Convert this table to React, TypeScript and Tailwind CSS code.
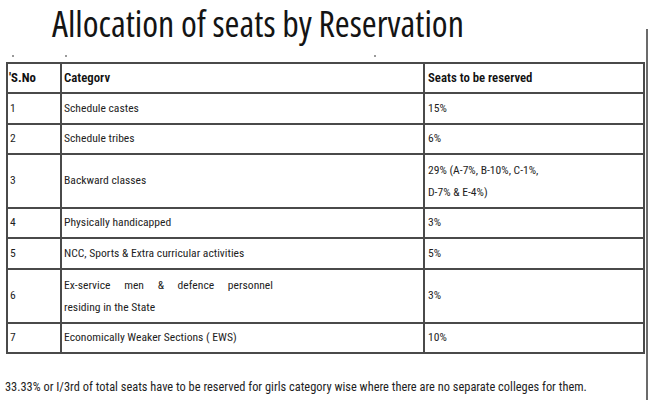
import React from "react";

type Row = {
  no: string;
  cat: React.ReactNode;
  seats: React.ReactNode;
  h: string;
  last?: boolean;
};

const rows: Row[] = [
  { no: "1", cat: "Schedule castes", seats: "15%", h: "h-[31px]" },
  { no: "2", cat: "Schedule tribes", seats: "6%", h: "h-[30px]" },
  {
    no: "3",
    cat: "Backward classes",
    seats: (
      <div className="leading-[22px]">
        <div>29% (A-7%, B-10%, C-1%,</div>
        <div>D-7% &amp; E-4%)</div>
      </div>
    ),
    h: "h-[54px]",
  },
  { no: "4", cat: "Physically handicapped", seats: "3%", h: "h-[30px]" },
  { no: "5", cat: "NCC, Sports & Extra curricular activities", seats: "5%", h: "h-[31px]" },
  {
    no: "6",
    cat: (
      <div className="leading-[22px]">
        <div className="flex w-[209px] justify-between">
          <span>Ex-service</span>
          <span>men</span>
          <span>&amp;</span>
          <span>defence</span>
          <span>personnel</span>
        </div>
        <div>residing in the State</div>
      </div>
    ),
    seats: "3%",
    h: "h-[54px]",
  },
  { no: "7", cat: "Economically Weaker Sections ( EWS)", seats: "10%", h: "h-[28px]", last: true },
];

export default function App() {
  return (
    <div className="w-[650px] h-[400px] bg-white overflow-hidden flex text-[#1e1e1e] font-['Roboto',sans-serif] font-stretch-condensed">
      <div className="w-[646px] flex flex-col">
        <h1 className="h-[50px] pl-[52px] pt-[6px] text-[36px] leading-[36px] font-normal text-[#141414] whitespace-nowrap font-['Open_Sans',sans-serif] font-stretch-condensed">
          Allocation of seats by Reservation
        </h1>
        <div className="h-[12px] flex items-center">
          <span className="ml-[12px] w-[2px] h-[2px] bg-[#9a9a9a]" />
          <span className="ml-[51px] w-[2px] h-[2px] bg-[#9a9a9a]" />
          <span className="ml-[307px] w-[2px] h-[2px] bg-[#9a9a9a]" />
        </div>
        <div className="ml-[6px] w-[639px] border-2 border-[#4a4a4a] text-[11.6px]">
          <div className="grid grid-cols-[54px_363px_1fr] h-[30px] border-b-2 border-[#4a4a4a] font-semibold text-[12.8px] text-[#111]">
            <div className="border-r-2 border-[#4a4a4a] flex items-center pl-[1px] font-bold">'S.No</div>
            <div className="border-r-2 border-[#4a4a4a] flex items-center pl-[2px]">Categorv</div>
            <div className="flex items-center pl-[3px]">Seats to be reserved</div>
          </div>
          {rows.map((r) => (
            <div
              key={r.no}
              className={`grid grid-cols-[54px_363px_1fr] ${r.h} ${r.last ? "" : "border-b-2 border-[#4a4a4a]"}`}
            >
              <div className="border-r-2 border-[#4a4a4a] flex items-center pl-[2px]">{r.no}</div>
              <div className="border-r-2 border-[#4a4a4a] flex items-center pl-[2px]">{r.cat}</div>
              <div className="flex items-center pl-[3px]">{r.seats}</div>
            </div>
          ))}
        </div>
        <p className="mt-[25px] pl-[5px] text-[12.4px] leading-[16px] whitespace-nowrap">
          33.33% or I/3rd of total seats have to be reserved for girls category wise where there are no separate colleges for them.
        </p>
      </div>
      <div className="mt-[29px] w-[2px] h-[371px] bg-[#6b6b6b]" />
    </div>
  );
}
